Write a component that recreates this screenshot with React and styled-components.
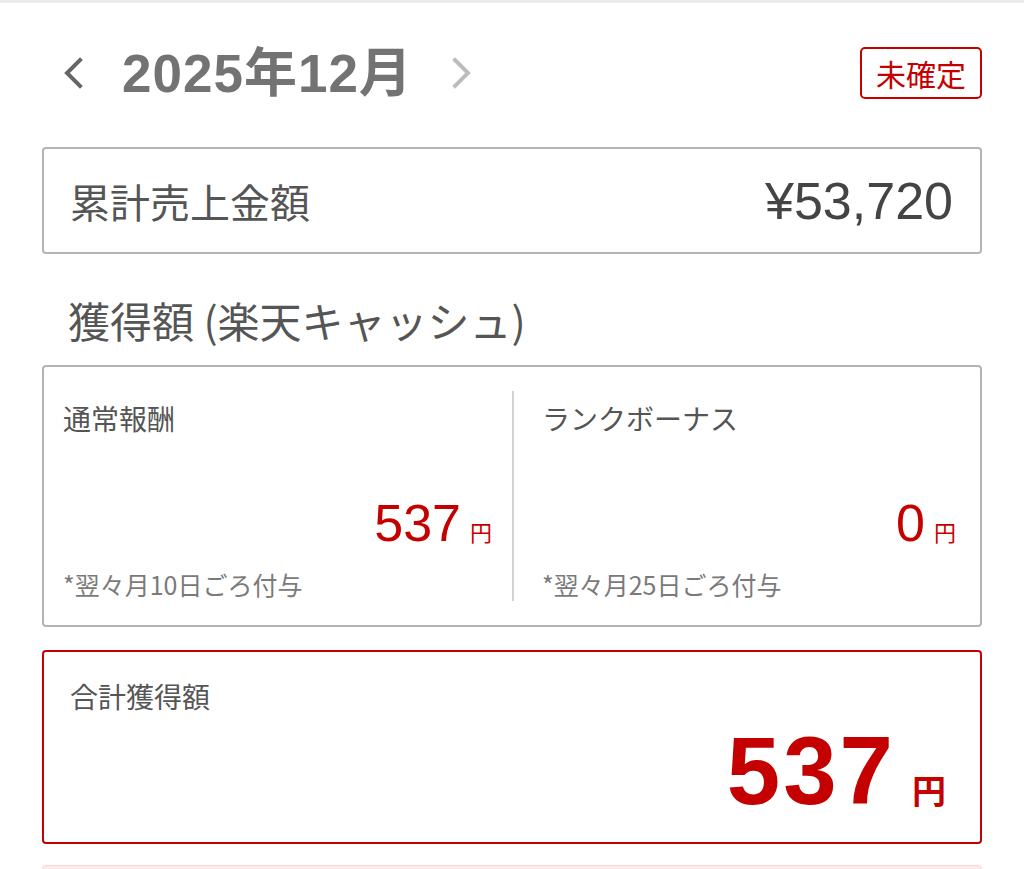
import React from 'react';
import styled, { createGlobalStyle } from 'styled-components';

const GlobalStyle = createGlobalStyle`
  html, body {
    margin: 0;
    padding: 0;
    background: #fff;
    overflow: hidden;
  }
  body {
    font-family: "Noto Sans CJK JP", "Noto Sans", sans-serif;
    color: #555;
  }
`;

const RED = '#c40000';

const TopLine = styled.div`
  height: 3px;
  background: #ebebeb;
`;

const Page = styled.div`
  padding: 0 42px;
`;

const Header = styled.div`
  display: flex;
  align-items: center;
  justify-content: space-between;
  height: 100px;
  margin: 20px 0 24px;
`;

const MonthNav = styled.div`
  display: flex;
  align-items: center;
`;

const NavButton = styled.button`
  display: grid;
  place-items: center;
  width: 40px;
  height: 44px;
  padding: 0;
  border: none;
  background: none;
  color: ${(p) => (p.$muted ? '#bdbdbd' : '#666')};
  margin-left: ${(p) => p.$ml || 0}px;
  cursor: pointer;
`;

const MonthTitle = styled.h1`
  margin: 0 28px 0 28px;
  font-family: "Liberation Sans", "Noto Sans CJK JP", sans-serif;
  font-size: 53px;
  font-weight: 700;
  letter-spacing: 1px;
  line-height: 1;
  color: #737373;
`;

const StatusBadge = styled.span`
  display: grid;
  place-items: center;
  box-sizing: border-box;
  width: 122px;
  height: 52px;
  border: 2px solid ${RED};
  border-radius: 5px;
  color: ${RED};
  font-size: 30px;
  line-height: 1;
`;

const TotalSalesCard = styled.div`
  box-sizing: border-box;
  height: 107px;
  display: flex;
  align-items: center;
  justify-content: space-between;
  padding: 0 27px 0 26px;
  border: 2px solid #b4b4b4;
  border-radius: 4px;
`;

const SalesLabel = styled.span`
  font-size: 40px;
  color: #555;
  line-height: 1.2;
`;

const SalesValue = styled.span`
  font-family: "Liberation Sans", sans-serif;
  font-size: 52px;
  color: #444;
  line-height: 1;
`;

const SectionTitle = styled.h2`
  margin: 42px 0 21px;
  padding-left: 26px;
  font-size: 42px;
  font-weight: 400;
  line-height: 1.15;
  color: #555;
`;

const SplitCard = styled.div`
  box-sizing: border-box;
  height: 262px;
  display: flex;
  padding: 24px 0;
  border: 2px solid #b4b4b4;
  border-radius: 4px;
`;

const RewardColumn = styled.div`
  width: 50%;
  flex: none;
  box-sizing: border-box;
  display: flex;
  flex-direction: column;
  padding: 11px ${(p) => p.$pr}px 3px ${(p) => p.$pl}px;
  border-left: ${(p) => (p.$divider ? '2px solid #d2d2d2' : 'none')};
`;

const RewardLabel = styled.div`
  font-size: 28px;
  line-height: 1.2;
  color: #555;
`;

const Amount = styled.div`
  margin-top: auto;
  display: flex;
  justify-content: flex-end;
  align-items: baseline;
  line-height: 1;
  color: ${RED};
`;

const AmountNumber = styled.span`
  font-family: "Liberation Sans", sans-serif;
  font-size: ${(p) => p.$size}px;
  font-weight: ${(p) => (p.$bold ? 700 : 400)};
  letter-spacing: ${(p) => (p.$bold ? 3 : 0)}px;
`;

const Yen = styled.span`
  font-size: ${(p) => p.$size}px;
  font-weight: ${(p) => (p.$bold ? 700 : 400)};
  margin-left: ${(p) => p.$gap}px;
`;

const Note = styled.div`
  margin-top: 21px;
  font-size: 25px;
  line-height: 1.15;
  color: #7a7a7a;
`;

const TotalCard = styled.div`
  box-sizing: border-box;
  height: 194px;
  margin-top: 23px;
  display: flex;
  flex-direction: column;
  justify-content: space-between;
  padding: 28px 34px 23px 26px;
  border: 2px solid ${RED};
  border-radius: 4px;
`;

const NextCard = styled.div`
  height: 100px;
  margin-top: 21px;
  background: #fdeaea;
  border: 1px solid #f6d8d8;
  border-radius: 4px;
`;

const Chevron = ({ dir }) => (
  <svg width="22" height="32" viewBox="0 0 22 32" fill="none">
    <polyline
      points={dir === 'left' ? '17,3 4,16 17,29' : '5,3 18,16 5,29'}
      stroke="currentColor"
      strokeWidth="4"
      strokeLinecap="square"
    />
  </svg>
);

const rewards = [
  { label: '通常報酬', amount: 537, note: '*翌々月10日ごろ付与', pl: 19, pr: 20, gap: 9 },
  { label: 'ランクボーナス', amount: 0, note: '*翌々月25日ごろ付与', pl: 28, pr: 24, gap: 9, divider: true },
];

const App = () => {
  return (
    <>
      <GlobalStyle />
      <TopLine />
      <Page>
        <Header>
          <MonthNav>
            <NavButton $ml={12} aria-label="前の月">
              <Chevron dir="left" />
            </NavButton>
            <MonthTitle>2025年12月</MonthTitle>
            <NavButton $muted aria-label="次の月">
              <Chevron dir="right" />
            </NavButton>
          </MonthNav>
          <StatusBadge>未確定</StatusBadge>
        </Header>

        <TotalSalesCard>
          <SalesLabel>累計売上金額</SalesLabel>
          <SalesValue>¥53,720</SalesValue>
        </TotalSalesCard>

        <SectionTitle>獲得額 (楽天キャッシュ)</SectionTitle>

        <SplitCard>
          {rewards.map((r) => (
            <RewardColumn key={r.label} $pl={r.pl} $pr={r.pr} $divider={r.divider}>
              <RewardLabel>{r.label}</RewardLabel>
              <Amount>
                <AmountNumber $size={52}>{r.amount}</AmountNumber>
                <Yen $size={22} $gap={r.gap}>円</Yen>
              </Amount>
              <Note>{r.note}</Note>
            </RewardColumn>
          ))}
        </SplitCard>

        <TotalCard>
          <RewardLabel>合計獲得額</RewardLabel>
          <Amount>
            <AmountNumber $size={96} $bold>537</AmountNumber>
            <Yen $size={34} $gap={16} $bold>円</Yen>
          </Amount>
        </TotalCard>

        <NextCard />
      </Page>
    </>
  );
};

export default App;
